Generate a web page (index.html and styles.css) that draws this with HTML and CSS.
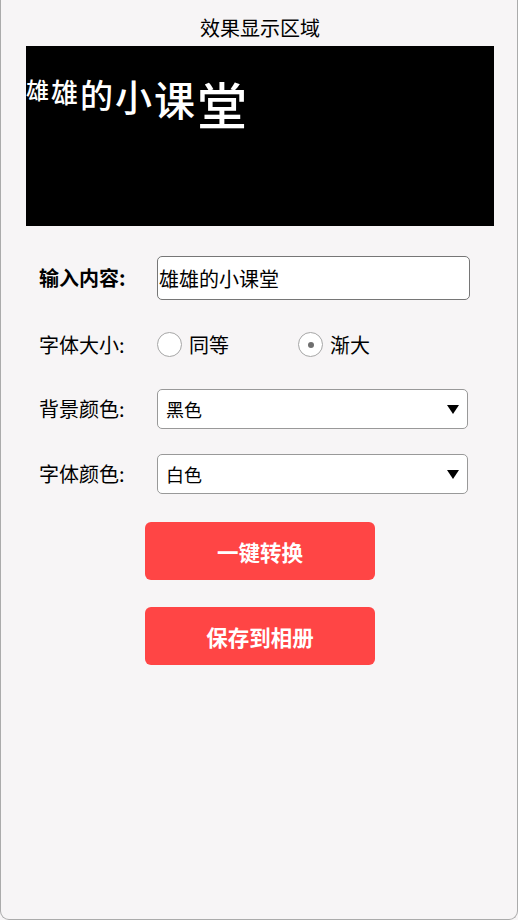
FILE: index.html
```html
<!DOCTYPE html>
<html lang="zh-CN">
<head>
  <meta charset="utf-8">
  <title>效果显示区域</title>
  <link rel="stylesheet" href="styles.css">
</head>
<body>

<div class="page">
  <div class="title">效果显示区域</div>

  <div class="preview">
    <div class="preview-text">
      <span class="s1">雄</span><span class="s2">雄</span><span class="s3">的</span><span class="s4">小</span><span class="s5">课</span><span class="s6">堂</span>
    </div>
  </div>

  <div class="form">
    <div class="row">
      <label class="label label-bold" for="content">输入内容:</label>
      <input class="text-input" id="content" type="text" value="雄雄的小课堂">
    </div>

    <div class="row row-radio">
      <span class="label">字体大小:</span>
      <label class="option"><input type="radio" name="size" value="same"><span>同等</span></label>
      <label class="option"><input type="radio" name="size" value="grow" checked><span>渐大</span></label>
    </div>

    <div class="row row-select">
      <span class="label">背景颜色:</span>
      <div class="select-wrap">
        <select class="select">
          <option selected>黑色</option>
          <option>白色</option>
          <option>红色</option>
        </select>
      </div>
    </div>

    <div class="row row-select">
      <span class="label">字体颜色:</span>
      <div class="select-wrap">
        <select class="select">
          <option selected>白色</option>
          <option>黑色</option>
          <option>红色</option>
        </select>
      </div>
    </div>
  </div>

  <div class="actions">
    <button class="btn" type="button">一键转换</button>
    <button class="btn" type="button">保存到相册</button>
  </div>
</div>

</body>
</html>
```

FILE: styles.css
```css
html, body {
  margin: 0;
  padding: 0;
  height: 100%;
}
body {
  background: #f7f5f6;
  color: #000;
  font-family: "Noto Sans CJK SC", "Microsoft YaHei", sans-serif;
}

.page {
  box-sizing: border-box;
  height: 920px;
  border: 1px solid #ababab;
  border-top: none;
  border-radius: 0 0 9px 9px;
  background: #f7f5f6;
  padding: 14px 0 0 25px;
}

.title {
  width: 468px;
  text-align: center;
  font-size: 20px;
  line-height: 28px;
}

.preview {
  width: 468px;
  height: 180px;
  margin-top: 4px;
  background: #000;
  overflow: hidden;
}

/* text grows char by char, tops aligned like a canvas fillText */
.preview-text {
  display: flex;
  align-items: flex-start;
  gap: 2px;
  margin: 32px 0 0 0;
  color: #fff;
  font-weight: 500;
}
.preview-text span {
  line-height: 1;
}
.s1 { font-size: 23px; }
.s2 { font-size: 27px; }
.s3 { font-size: 33px; }
.s4 { font-size: 37px; }
.s5 { font-size: 41px; }
.s6 { font-size: 50px; }

.form {
  display: flex;
  flex-direction: column;
  gap: 25px;
  margin: 30px 0 0 13px;
}

.row {
  display: flex;
  align-items: center;
  height: 44px;
}
.row-radio {
  height: 39px;
}
.row-select {
  height: 40px;
}

.label {
  width: 118px;
  font-size: 20px;
  line-height: 24px;
}
.label-bold {
  font-weight: bold;
}

.text-input {
  box-sizing: border-box;
  width: 313px;
  height: 44px;
  margin: 0;
  padding: 0 0 0 1px;
  border: 1px solid #767676;
  border-radius: 5px;
  background: #fff;
  font-family: inherit;
  font-size: 20px;
  color: #000;
  outline: none;
}

.option {
  display: flex;
  align-items: center;
  gap: 7px;
  width: 141px;
  font-size: 20px;
  line-height: 24px;
}
.option input {
  -webkit-appearance: none;
  appearance: none;
  box-sizing: border-box;
  width: 25px;
  height: 25px;
  margin: 0;
  border: 1px solid #a6a6a6;
  border-radius: 50%;
  background: #fff;
  display: flex;
  align-items: center;
  justify-content: center;
}
.option input:checked::after {
  content: "";
  width: 6px;
  height: 6px;
  border-radius: 50%;
  background: #6f6f6f;
}

.select-wrap {
  position: relative;
}
.select-wrap::after {
  content: "";
  position: absolute;
  right: 9px;
  top: 16px;
  border-left: 6.5px solid transparent;
  border-right: 6.5px solid transparent;
  border-top: 9px solid #000;
  pointer-events: none;
}
.select {
  -webkit-appearance: none;
  appearance: none;
  box-sizing: border-box;
  width: 311px;
  height: 40px;
  margin: 0;
  padding: 0 0 0 8px;
  border: 1px solid #999;
  border-radius: 5px;
  background: #fff;
  font-family: inherit;
  font-size: 18px;
  color: #000;
  outline: none;
}

.actions {
  display: flex;
  flex-direction: column;
  align-items: center;
  gap: 27px;
  width: 468px;
  margin-top: 28px;
}

.btn {
  width: 230px;
  height: 58px;
  border: none;
  border-radius: 6px;
  background: #ff4545;
  color: #fff;
  font-family: inherit;
  font-size: 21.5px;
  font-weight: bold;
  cursor: pointer;
}
```
